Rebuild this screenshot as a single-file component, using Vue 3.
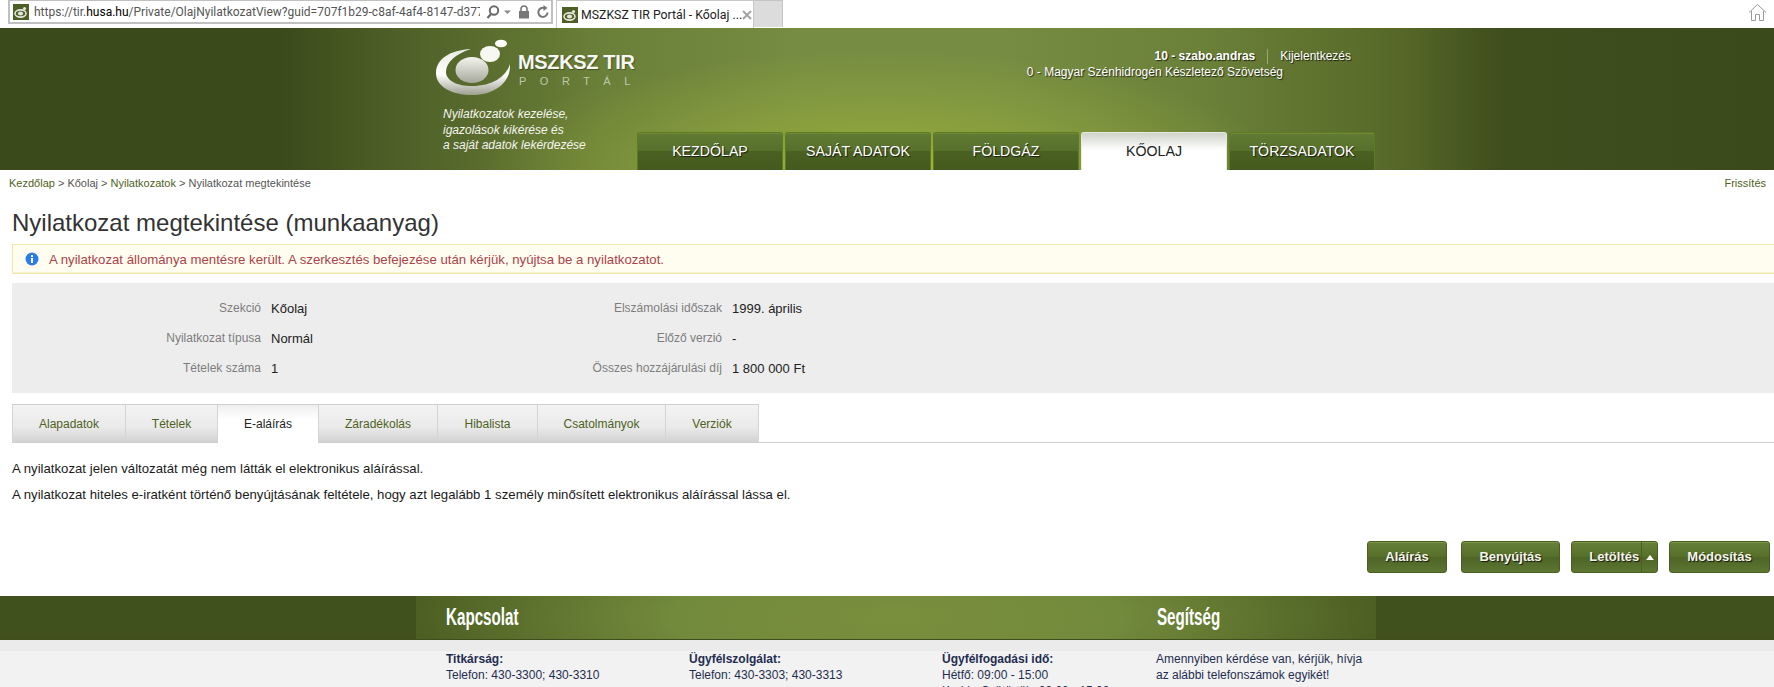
<script setup>
const navTabs = [
  { label: 'KEZDŐLAP' },
  { label: 'SAJÁT ADATOK' },
  { label: 'FÖLDGÁZ' },
  { label: 'KŐOLAJ', active: true },
  { label: 'TÖRZSADATOK' }
]
const facts = [
  ['Szekció', 'Kőolaj', 'Elszámolási időszak', '1999. április'],
  ['Nyilatkozat típusa', 'Normál', 'Előző verzió', '-'],
  ['Tételek száma', '1', 'Összes hozzájárulási díj', '1 800 000 Ft']
]
const subTabs = [
  { label: 'Alapadatok', width: 114 },
  { label: 'Tételek', width: 92 },
  { label: 'E-aláírás', width: 101, active: true },
  { label: 'Záradékolás', width: 119 },
  { label: 'Hibalista', width: 100 },
  { label: 'Csatolmányok', width: 128 },
  { label: 'Verziók', width: 93 }
]
</script>

<template>
  <div class="page">
    <div class="browser">
      <span class="back"></span>
      <div class="address">
        <svg class="favicon" viewBox="0 0 16 16"><rect width="16" height="16" fill="#4c5f24"/><ellipse cx="7.5" cy="9.5" rx="5.5" ry="3.6" fill="none" stroke="#e4e4dc" stroke-width="1.6"/><ellipse cx="7.5" cy="9.5" rx="2.6" ry="2" fill="#e4e4dc"/><circle cx="11.5" cy="4.5" r="1.6" fill="#e4e4dc"/></svg>
        <span class="url"><span class="url-dim">https://tir.</span><b>husa.hu</b><span class="url-dim">/Private/OlajNyilatkozatView?guid=707f1b29-c8af-4af4-8147-d377c</span></span>
        <svg class="tool" width="16" height="16" viewBox="0 0 16 16"><circle cx="9" cy="6.5" r="4.2" fill="none" stroke="#6a6a6a" stroke-width="2"/><path d="M6 10 2.5 14" stroke="#6a6a6a" stroke-width="2.2"/></svg>
        <svg class="tool caret" width="9" height="16" viewBox="0 0 9 16"><path d="M1 6.5h7L4.5 10z" fill="#8a8a8a"/></svg>
        <svg class="tool" width="14" height="16" viewBox="0 0 14 16"><path d="M4 7V5a3 3 0 0 1 6 0v2" fill="none" stroke="#777" stroke-width="1.6"/><rect x="2" y="7" width="10" height="7.5" fill="#777"/></svg>
        <svg class="tool" width="14" height="16" viewBox="0 0 14 16"><path d="M11.5 8.5A4.6 4.6 0 1 1 8.5 4" fill="none" stroke="#777" stroke-width="2"/><path d="M7.5 1v6l4-3z" fill="#777"/></svg>
      </div>
      <div class="btab">
        <svg class="favicon" viewBox="0 0 16 16"><rect width="16" height="16" fill="#4c5f24"/><ellipse cx="7.5" cy="9.5" rx="5.5" ry="3.6" fill="none" stroke="#e4e4dc" stroke-width="1.6"/><ellipse cx="7.5" cy="9.5" rx="2.6" ry="2" fill="#e4e4dc"/><circle cx="11.5" cy="4.5" r="1.6" fill="#e4e4dc"/></svg>
        <span class="btab-title">MSZKSZ TIR Portál - Kőolaj ...</span>
        <svg class="btab-x" width="10" height="10" viewBox="0 0 10 10"><path d="M1 1l8 8M9 1l-8 8" stroke="#a4a4a4" stroke-width="2"/></svg>
      </div>
      <div class="newtab"></div>
      <svg class="home" width="19" height="19" viewBox="0 0 19 19"><path d="M1 9.5 9.5 1.5 18 9.5M3.5 8v9.5H7.5v-6h4v6h4V8" fill="none" stroke="#9a9a9a"/></svg>
    </div>

    <header class="hero">
      <div class="brand">
        <div class="logo-row">
          <svg class="logo" width="92" height="70" viewBox="0 0 92 70">
            <defs>
              <linearGradient id="cres" x1="0" y1="0" x2="0" y2="1"><stop offset="0" stop-color="#e9ebe2"/><stop offset=".55" stop-color="#ffffff"/><stop offset="1" stop-color="#9da08f"/></linearGradient>
              <linearGradient id="orb" x1="0" y1="0" x2="0" y2="1"><stop offset="0" stop-color="#f4f4ee"/><stop offset="1" stop-color="#a6a89a"/></linearGradient>
            </defs>
            <path d="M49 18C28 19 14 28 14 42C14 56 30 64 50 64C72 64 89 52 88 33C84 46 70 55 50 55C34 55 24 49 24 41C24 32 33 23 49 18Z" fill="url(#cres)"/>
            <ellipse cx="50" cy="39" rx="16.5" ry="13" fill="url(#orb)"/>
            <ellipse cx="68" cy="23" rx="10" ry="8" fill="#f8f8f2"/>
            <ellipse cx="79" cy="12.500" rx="6" ry="3.800" fill="#ffffff"/>
          </svg>
          <div class="wordmark">
            <div class="word-main">MSZKSZ TIR</div>
            <div class="word-sub">PORTÁL</div>
          </div>
        </div>
        <p class="tagline">Nyilatkozatok kezelése,<br>igazolások kikérése és<br>a saját adatok lekérdezése</p>
      </div>
      <div class="hero-right">
        <div class="user-row">
          <b>10 - szabo.andras</b>
          <span class="sep"></span>
          <span>Kijelentkezés</span>
        </div>
        <div class="org-row">0 - Magyar Szénhidrogén Készletező Szövetség</div>
        <nav class="nav">
          <a v-for="t in navTabs" :key="t.label" class="nav-tab" :class="{ on: t.active }">{{ t.label }}</a>
        </nav>
      </div>
    </header>

    <div class="crumbs">
      <div><a>Kezdőlap</a> &gt; Kőolaj &gt; <a>Nyilatkozatok</a> &gt; Nyilatkozat megtekintése</div>
      <a>Frissítés</a>
    </div>

    <main class="main">
      <h1>Nyilatkozat megtekintése (munkaanyag)</h1>
      <div class="alert">
        <svg width="14" height="14" viewBox="0 0 14 14"><circle cx="7" cy="7" r="6.500" fill="#2a7de8"/><rect x="6" y="6" width="2" height="5" fill="#fff"/><rect x="6" y="3" width="2" height="2" fill="#fff"/></svg>
        <span>A nyilatkozat állománya mentésre került. A szerkesztés befejezése után kérjük, nyújtsa be a nyilatkozatot.</span>
      </div>
      <section class="facts">
        <template v-for="row in facts" :key="row[0]">
          <span class="fl">{{ row[0] }}</span>
          <span class="fv">{{ row[1] }}</span>
          <span class="fl">{{ row[2] }}</span>
          <span class="fv">{{ row[3] }}</span>
        </template>
      </section>
      <div class="subtabs">
        <a v-for="t in subTabs" :key="t.label" class="subtab" :class="{ on: t.active }" :style="{ width: t.width + 'px' }">{{ t.label }}</a>
      </div>
      <div class="body-text">
        <p>A nyilatkozat jelen változatát még nem látták el elektronikus aláírással.</p>
        <p>A nyilatkozat hiteles e-iratként történő benyújtásának feltétele, hogy azt legalább 1 személy minősített elektronikus aláírással lássa el.</p>
      </div>
      <div class="actions">
        <button class="btn w80">Aláírás</button>
        <button class="btn w99">Benyújtás</button>
        <div class="btn split"><span class="split-l">Letöltés</span><span class="split-r"><svg width="8" height="5" viewBox="0 0 8 5"><path d="M0 5 4 0l4 5z" fill="#fff"/></svg></span></div>
        <button class="btn w101">Módosítás</button>
      </div>
    </main>

    <footer class="foot">
      <div class="foot-bar">
        <div class="foot-inner">
          <h2>Kapcsolat</h2>
          <h2>Segítség</h2>
        </div>
      </div>
      <div class="foot-strip"></div>
      <div class="foot-cols">
        <div class="c1"><b>Titkárság:</b><br>Telefon: 430-3300; 430-3310</div>
        <div class="c2"><b>Ügyfélszolgálat:</b><br>Telefon: 430-3303; 430-3313</div>
        <div class="c3"><b>Ügyfélfogadási idő:</b><br>Hétfő: 09:00 - 15:00<span class="third">Kedd - Csütörtök: 09:00 - 15:00</span></div>
        <div class="c4">Amennyiben kérdése van, kérjük, hívja<br>az alábbi telefonszámok egyikét!</div>
      </div>
    </footer>
  </div>
</template>

<style>
html, body { margin: 0; height: 687px; overflow: hidden; background: #fff; }
</style>

<style scoped>
.page { width: 1774px; height: 687px; overflow: hidden; font-family: "Liberation Sans", Arial, sans-serif; font-size: 12px; color: #222; }

.browser { height: 28px; display: flex; align-items: flex-start; position: relative; background: #fff; box-sizing: border-box; }
.back { width: 8px; height: 24px; margin-left: -14px; margin-right: 14px; border: 1px solid #b5b5b5; border-radius: 50%; box-sizing: border-box; }
.address { width: 545px; height: 24px; box-sizing: border-box; border: 2px solid #c0c0c0; border-top: 1px solid #c0c0c0; display: flex; align-items: center; padding-left: 3px; }
.favicon { width: 16px; height: 16px; flex: none; }
.url { font-family: Roboto, sans-serif; font-size: 12px; margin-left: 5px; width: 446px; overflow: hidden; white-space: nowrap; color: #111; }
.url b { font-weight: 400; color: #000; }
.url-dim { color: #555; }
.tool { margin-left: 5px; flex: none; }
.caret { margin-left: 2px; }
.btab { margin-left: 3px; width: 198px; height: 28px; box-sizing: border-box; border-left: 1px solid #c8c8c8; border-top: 1px solid #c8c8c8; border-right: 1px solid #c8c8c8; display: flex; align-items: center; padding-left: 5px; gap: 3px; }
.btab-title { font-family: Roboto, sans-serif; font-size: 12.300px; color: #222; white-space: nowrap; flex: none; width: 158px; }
.btab-x { flex: none; }
.newtab { width: 29px; height: 27px; background: #dcdcdc; border-top: 1px solid #c4c4c4; border-right: 1px solid #c4c4c4; box-sizing: border-box; }
.home { margin-left: auto; margin-right: 7px; margin-top: 3px; }

.hero { height: 142px; box-sizing: border-box; padding-left: 432px; display: grid; grid-template-columns: 205px 738px; overflow: hidden;
  background:
    radial-gradient(ellipse 400px 120px at 880px 142px, rgba(166,186,62,1) 0, rgba(150,172,60,.65) 35%, rgba(122,143,64,0) 100%),
    linear-gradient(90deg, #3b4a1b 0, #3b4a1b 280px, #4e6027 400px, #6a7f38 600px, #768c42 800px, #768c42 1000px, #6b8139 1200px, #566828 1400px, #3f4e1d 1500px, #3b4a1b 1774px); }
.brand { position: relative; color: #fff; }
.logo-row { display: flex; margin-top: 3px; margin-left: -10px; }
.logo { flex: none; }
.wordmark { margin-left: 4px; margin-top: 21px; width: 116px; }
.word-main { font-size: 20px; font-weight: 700; color: #f6f6f2; text-shadow: 1px 1px 1px rgba(0,0,0,.35); white-space: nowrap; line-height: 20px; letter-spacing: -.35px; }
.word-sub { font-size: 11px; line-height: 13px; margin-top: 3px; margin-left: 1px; color: #bfc7a8; letter-spacing: 13.500px; white-space: nowrap; }
.tagline { margin: 6px 0 0 11px; font-size: 12px; font-style: italic; line-height: 15.500px; color: #f4f4ee; white-space: nowrap; }

.hero-right { display: flex; flex-direction: column; color: #fff; text-shadow: 1px 1px 1px rgba(0,0,0,.7); }
.user-row { margin-top: 20px; padding-right: 24px; display: flex; justify-content: flex-end; align-items: center; height: 16px; white-space: nowrap; }
.sep { width: 1px; height: 15px; background: rgba(255,255,255,.35); margin: 0 12px; }
.org-row { padding-right: 92px; text-align: right; height: 16px; line-height: 16px; white-space: nowrap; }
.nav { margin-top: auto; display: flex; gap: 2px; height: 38px; }
.nav-tab { width: 146px; height: 38px; box-sizing: border-box; text-align: center; font-size: 14.200px; line-height: 36px; color: #fff; border: 1px solid #5f7b20; border-bottom: 0; border-radius: 3px 3px 0 0; background: linear-gradient(#607a33 0, #57702c 48%, #4b6122 50%, #445a1e 100%); box-shadow: inset 0 1px 0 #6f8a3a; text-shadow: 1px 1px 1px rgba(0,0,0,.75); }
.nav-tab.on { background: linear-gradient(#cfd3c8 0, #f7f7f5 14px, #fff 18px); color: #222; text-shadow: none; border-color: #e8e8e4; box-shadow: none; }

.crumbs { height: 26px; padding: 0 8px 0 9px; display: flex; justify-content: space-between; align-items: center; font-size: 11px; color: #555; }
.crumbs a { color: #4e6122; }

.main { padding-left: 12px; }
h1 { margin: 0; height: 48px; line-height: 54px; font-size: 24px; font-weight: 400; color: #333; white-space: nowrap; }
.alert { height: 30px; box-sizing: border-box; border: 1px solid #f3e6ab; border-right: 0; background: #fffdf0; box-shadow: inset 0 -1px 0 #f5f0cf; display: flex; align-items: center; padding-left: 12px; gap: 10px; font-size: 13.200px; color: #a9434a; }
.facts { margin-top: 9px; height: 110px; box-sizing: border-box; padding: 10px 0; background: #ededed; display: grid; grid-template-columns: 249px 201px 260px auto; grid-auto-rows: 30px; align-items: center; }
.fl { text-align: right; color: #7d7d7d; white-space: nowrap; }
.fv { padding-left: 10px; color: #222; white-space: nowrap; font-size: 13px; }
.subtabs { margin-top: 11px; height: 38px; display: flex; border-bottom: 1px solid #cfcfcf; }
.subtab { height: 38px; box-sizing: border-box; text-align: center; line-height: 38px; color: #4e6122; border-top: 1px solid #cfcfcf; border-right: 1px solid #d4d4d4; background: linear-gradient(#f3f3f3 0, #eaeaea 60%, #d2d2d2 100%); flex: none; }
.subtab:first-child { border-left: 1px solid #d4d4d4; }
.subtab.on { background: linear-gradient(#eeeeee 0, #ffffff 14px); color: #222; height: 39px; }
.body-text { height: 98px; padding-top: 18px; box-sizing: border-box; font-size: 13.200px; }
.body-text p { margin: 0 0 11px; line-height: 15px; color: #1a1a1a; white-space: nowrap; }
.actions { display: flex; justify-content: flex-end; gap: 14px; padding-right: 4px; height: 32px; }
.btn { height: 32px; box-sizing: border-box; border: 1px solid #4a5f1f; border-radius: 3px; padding: 0; color: #f4f4ea; font: 700 13px/28px "Liberation Sans", Arial, sans-serif; text-shadow: 1px 1px 1px rgba(0,0,0,.8); background: linear-gradient(#66803a 0, #56702a 48%, #4e6526 52%, #5d7632 100%); box-shadow: inset 0 1px 0 #7b9545; }
.w80 { width: 80px; }
.w99 { width: 99px; margin-right: -3px; }
.w101 { width: 101px; margin-left: -3px; }
.split { width: 87px; display: flex; }
.split-l { width: 70px; text-align: right; padding-right: 2px; box-sizing: border-box; line-height: 30px; }
.split-r { width: 16px; border-left: 1px solid #4a5f1f; display: flex; align-items: center; justify-content: center; box-sizing: border-box; }

.foot { margin-top: 23px; }
.foot-bar { height: 44px; box-sizing: border-box; background: #41511e; border-bottom: 1px solid #3f4e1c; padding-left: 416px; }
.foot-inner { width: 960px; height: 43px; box-sizing: border-box; padding: 0 0 0 30px; display: flex; background: radial-gradient(ellipse 500px 120px at 50% 50%, #7a8f3e 0, #728a3c 45%, #4a5c21 100%); }
h2 { margin: 0; font: 700 23px/43px "Liberation Sans", sans-serif; color: #fff; flex: none; width: 711px; white-space: nowrap; transform: scaleX(.66); transform-origin: left center; }
.foot-strip { height: 11px; background: #ebebeb; }
.foot-cols { background: #f2f2f2; padding-left: 446px; display: grid; grid-template-columns: 243px 253px 214px 300px; line-height: 16px; color: #1f2d50; height: 60px; white-space: nowrap; }
.third { display: block; margin-top: 0; }
</style>
